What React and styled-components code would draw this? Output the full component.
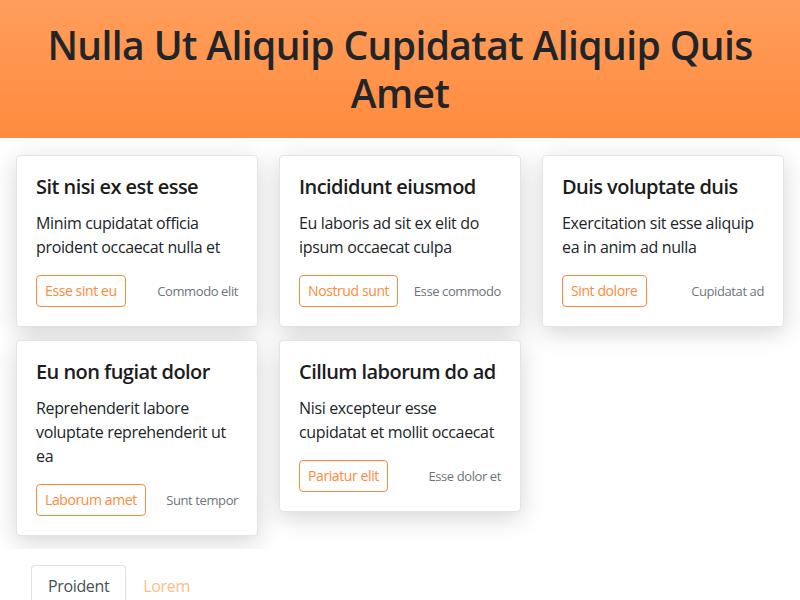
import React from "react";
import styled, { createGlobalStyle } from "styled-components";

const Global = createGlobalStyle`
  html, body { margin: 0; padding: 0; background: #fff; }
  body { font-family: "Open Sans", "Noto Sans", sans-serif; color: #212529; }
  * { box-sizing: border-box; }
`;

const Header = styled.header`
  background: linear-gradient(180deg, #ff9e5c 0%, #ff8b3d 100%);
  padding: 21px 20px;
  text-align: center;
`;

const Title = styled.h1`
  margin: 0;
  font-size: 39px;
  line-height: 48px;
  font-weight: 600;
  letter-spacing: -0.6px;
  color: #212529;
`;

const Grid = styled.section`
  display: grid;
  grid-template-columns: repeat(3, 1fr);
  column-gap: 21px;
  row-gap: 13px;
  align-items: start;
  padding: 17px 16px 13px;
  overflow: hidden;
`;

const Card = styled.article`
  background: #fff;
  border: 1px solid #e4e4e4;
  border-radius: 4px;
  padding: 19px;
  box-shadow: 0 6px 24px rgba(0, 0, 0, 0.17);
`;

const CardTitle = styled.h2`
  margin: 0 0 12px;
  font-size: 20px;
  line-height: 24px;
  font-weight: 600;
  letter-spacing: -0.55px;
  color: #1c1c1c;
`;

const CardText = styled.p`
  margin: 0 0 16px;
  font-size: 16px;
  line-height: 24px;
  letter-spacing: -0.35px;
  color: #212529;
`;

const Footer = styled.div`
  display: flex;
  align-items: center;
  justify-content: space-between;
`;

const OutlineButton = styled.button`
  font-family: inherit;
  font-size: 14px;
  line-height: 20px;
  letter-spacing: -0.4px;
  padding: 5px 8px;
  color: #fd8a3a;
  background: #fff;
  border: 1px solid #fd8a3a;
  border-radius: 4px;
  cursor: pointer;
`;

const Meta = styled.small`
  font-size: 13px;
  letter-spacing: -0.4px;
  color: #6c757d;
`;

const Tabs = styled.nav`
  display: flex;
  padding: 16px 31px 0;
`;

const Tab = styled.a`
  display: block;
  padding: 8px 16px;
  font-size: 16px;
  line-height: 24px;
  letter-spacing: -0.35px;
  border: 1px solid ${(p) => (p.$active ? "#dee2e6" : "transparent")};
  border-bottom: none;
  border-radius: 4px 4px 0 0;
  color: ${(p) => (p.$active ? "#495057" : "#ffbd85")};
  text-decoration: none;
  height: 50px;
`;

const cards = [
  { t: "Sit nisi ex est esse", d: "Minim cupidatat officia proident occaecat nulla et", b: "Esse sint eu", m: "Commodo elit" },
  { t: "Incididunt eiusmod", d: "Eu laboris ad sit ex elit do ipsum occaecat culpa", b: "Nostrud sunt", m: "Esse commodo" },
  { t: "Duis voluptate duis", d: "Exercitation sit esse aliquip ea in anim ad nulla", b: "Sint dolore", m: "Cupidatat ad" },
  { t: "Eu non fugiat dolor", d: "Reprehenderit labore voluptate reprehenderit ut ea", b: "Laborum amet", m: "Sunt tempor" },
  { t: "Cillum laborum do ad", d: "Nisi excepteur esse cupidatat et mollit occaecat", b: "Pariatur elit", m: "Esse dolor et" },
];

export default function App() {
  return (
    <>
      <Global />
      <Header>
        <Title>Nulla Ut Aliquip Cupidatat Aliquip Quis Amet</Title>
      </Header>
      <Grid>
        {cards.map((c) => (
          <Card key={c.t}>
            <CardTitle>{c.t}</CardTitle>
            <CardText>{c.d}</CardText>
            <Footer>
              <OutlineButton>{c.b}</OutlineButton>
              <Meta>{c.m}</Meta>
            </Footer>
          </Card>
        ))}
      </Grid>
      <Tabs>
        <Tab $active>Proident</Tab>
        <Tab>Lorem</Tab>
      </Tabs>
    </>
  );
}
